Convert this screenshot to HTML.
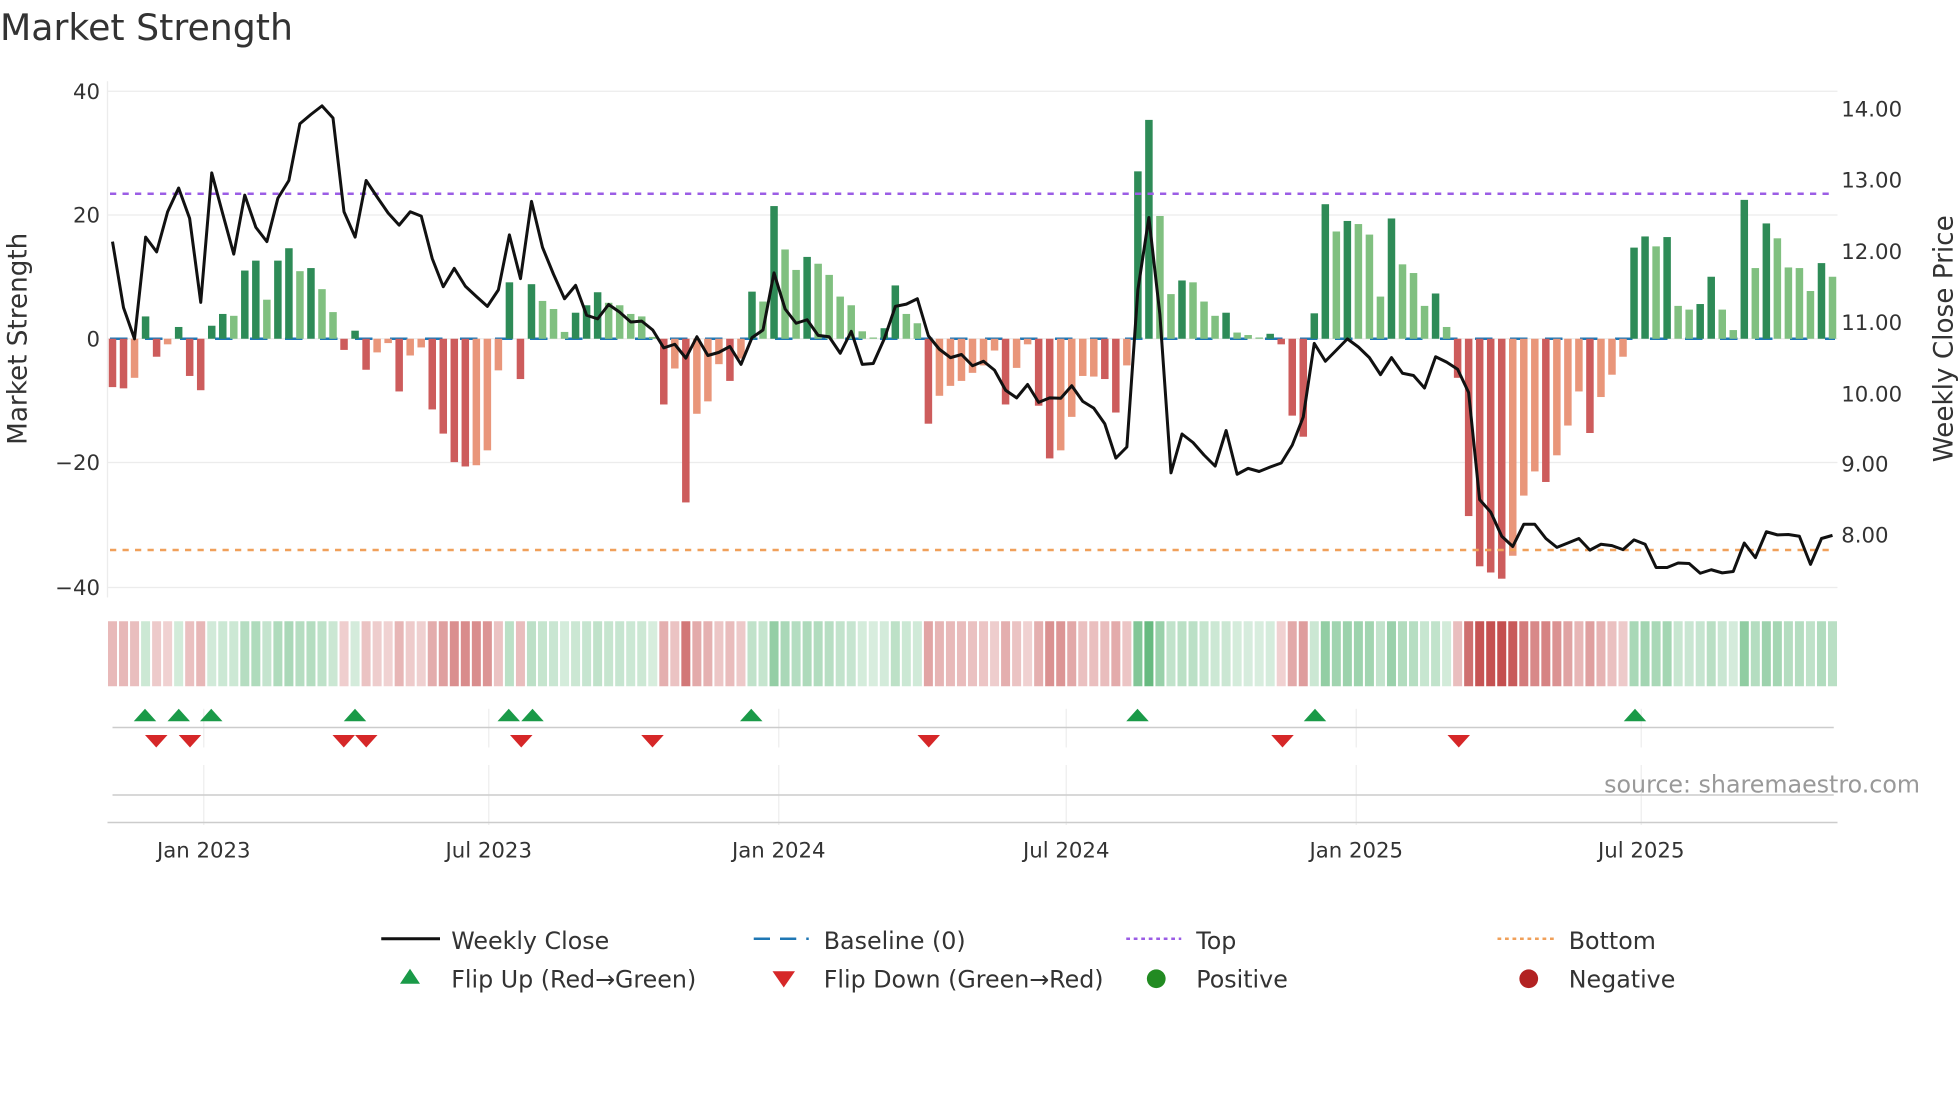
<!DOCTYPE html>
<html><head><meta charset="utf-8"><style>
html,body{margin:0;padding:0;background:#fff;width:1960px;height:1102px;overflow:hidden}
svg{display:block}
text{font-family:"DejaVu Sans","Liberation Sans",sans-serif;fill:#333}
</style></head><body>
<svg id="s" width="1960" height="1102" viewBox="0 0 1568 881.6" xmlns="http://www.w3.org/2000/svg">
<text x="0" y="32" font-size="29">Market Strength</text>
<g stroke="#ececec" stroke-width="1">
<line x1="86" y1="73" x2="1470" y2="73"/><line x1="86" y1="172" x2="1470" y2="172"/><line x1="86" y1="271" x2="1470" y2="271"/><line x1="86" y1="370" x2="1470" y2="370"/><line x1="86" y1="470" x2="1470" y2="470"/>
<line x1="86" y1="65" x2="86" y2="478"/>
</g>
<g font-size="17" text-anchor="end">
<text x="80" y="79">40</text><text x="80" y="178">20</text><text x="80" y="277">0</text><text x="80" y="376">−20</text><text x="80" y="476">−40</text>
</g>
<g font-size="17">
<text x="1473" y="93">14.00</text><text x="1473" y="150">13.00</text><text x="1473" y="207">12.00</text><text x="1473" y="264">11.00</text><text x="1473" y="321">10.00</text><text x="1473" y="377">9.00</text><text x="1473" y="434">8.00</text>
</g>
<text transform="translate(21,271) rotate(-90)" font-size="21" text-anchor="middle">Market Strength</text>
<text transform="translate(1562,271) rotate(-90)" font-size="21" text-anchor="middle">Weekly Close Price</text>
<g id="bars"></g>
<line x1="88" y1="155" x2="1468" y2="155" stroke="#9b5de5" stroke-width="2" stroke-dasharray="5 5"/>
<line x1="88" y1="440" x2="1468" y2="440" stroke="#f0a05a" stroke-width="2" stroke-dasharray="5 5"/>
<polyline id="price" fill="none" stroke="#111" stroke-width="2.4" stroke-linejoin="round"/>
<g id="heat"></g>
<g stroke="#eee" stroke-width="1">
<line x1="163" y1="567" x2="163" y2="598"/><line x1="391" y1="567" x2="391" y2="598"/><line x1="623" y1="567" x2="623" y2="598"/><line x1="853" y1="567" x2="853" y2="598"/><line x1="1085" y1="567" x2="1085" y2="598"/><line x1="1313" y1="567" x2="1313" y2="598"/>
<line x1="163" y1="612" x2="163" y2="660"/><line x1="391" y1="612" x2="391" y2="660"/><line x1="623" y1="612" x2="623" y2="660"/><line x1="853" y1="612" x2="853" y2="660"/><line x1="1085" y1="612" x2="1085" y2="660"/><line x1="1313" y1="612" x2="1313" y2="660"/>
</g>
<line x1="90" y1="582" x2="1467" y2="582" stroke="#ccc" stroke-width="1.2"/>
<line x1="90" y1="636" x2="1467" y2="636" stroke="#ccc" stroke-width="1.2"/>
<line x1="86" y1="658" x2="1470" y2="658" stroke="#ccc" stroke-width="1.2"/>
<g id="flips"></g>
<text x="1536" y="634" font-size="19" text-anchor="end" style="fill:#999">source: sharemaestro.com</text>
<g font-size="17" text-anchor="middle">
<text x="163" y="686">Jan 2023</text><text x="391" y="686">Jul 2023</text><text x="623" y="686">Jan 2024</text><text x="853" y="686">Jul 2024</text><text x="1085" y="686">Jan 2025</text><text x="1313" y="686">Jul 2025</text>
</g>
<g font-size="19">
<line x1="305" y1="751" x2="352" y2="751" stroke="#111" stroke-width="2.4"/>
<text x="361" y="759">Weekly Close</text>
<line x1="603" y1="751" x2="647" y2="751" stroke="#1f77b4" stroke-width="2" stroke-dasharray="13 8"/>
<text x="659" y="759">Baseline (0)</text>
<line x1="901" y1="751" x2="945" y2="751" stroke="#9b5de5" stroke-width="2" stroke-dasharray="3 3"/>
<text x="957" y="759">Top</text>
<line x1="1198" y1="751" x2="1243" y2="751" stroke="#f0a05a" stroke-width="2" stroke-dasharray="3 3"/>
<text x="1255" y="759">Bottom</text>
<polygon points="320,787 336,787 328,775" fill="#1a9a48"/>
<text x="361" y="790">Flip Up (Red→Green)</text>
<polygon points="618,777 636,777 627,790" fill="#d62728"/>
<text x="659" y="790">Flip Down (Green→Red)</text>
<circle cx="925" cy="783" r="7.5" fill="#228b22"/>
<text x="957" y="790">Positive</text>
<circle cx="1223" cy="783" r="7.5" fill="#b22222"/>
<text x="1255" y="790">Negative</text>
</g>
</svg>
<script>
var NS="http://www.w3.org/2000/svg";
function el(p,t,a){var e=document.createElementNS(NS,t);for(var k in a)e.setAttribute(k,a[k]);p.appendChild(e);return e;}
var B=[[-7.8,1],[-8,1],[-6.3,0],[3.6,1],[-2.9,1],[-0.9,0],[1.9,1],[-6,1],[-8.3,1],[2.1,1],[4,1],[3.7,0],[11,1],[12.6,1],[6.3,0],[12.6,1],[14.6,1],[10.9,0],[11.4,1],[8,0],[4.3,0],[-1.8,1],[1.3,1],[-5,1],[-2.2,0],[-0.7,0],[-8.5,1],[-2.7,0],[-1.4,0],[-11.4,1],[-15.3,1],[-19.9,1],[-20.6,1],[-20.4,0],[-18,0],[-5.1,0],[9.1,1],[-6.5,1],[8.8,1],[6.1,0],[4.8,0],
[1.1,0],[4.2,1],[5.4,1],[7.5,1],[5.8,0],[5.4,0],[4,0],[3.6,0],[0.3,0],[-10.6,1],[-4.8,0],[-26.4,1],[-12.1,0],[-10.1,0],[-4.1,0],[-6.8,1],[-3.2,0],[7.6,1],[6,0],[21.4,1],[14.4,0],[11.1,0],[13.2,1],[12.1,0],[10.3,0],[6.8,0],[5.4,0],[1.2,0],[0.2,0],[1.7,1],[8.6,1],[4,0],[2.5,0],[-13.7,1],[-9.2,0],[-7.6,0],[-6.8,0],[-5.5,0],[-4.3,0],[-1.9,0],
[-10.6,1],[-4.7,0],[-0.9,0],[-10.8,1],[-19.3,1],[-18,0],[-12.6,0],[-6,0],[-6.1,0],[-6.5,1],[-11.9,1],[-4.3,0],[27,1],[35.3,1],[19.8,0],[7.2,0],[9.4,1],[9.1,0],[6,0],[3.7,0],[4.2,1],[1,0],[0.6,0],[0.2,0],[0.8,1],[-0.9,1],[-12.4,1],[-15.8,1],[4.1,1],[21.7,1],[17.3,0],[19,1],[18.5,0],[16.8,0],[6.8,0],[19.4,1],[12,0],[10.6,0],[5.3,0],[7.3,1],
[1.9,0],[-6.3,1],[-28.6,1],[-36.7,1],[-37.7,1],[-38.7,1],[-35,0],[-25.3,0],[-21.4,0],[-23.1,1],[-18.8,0],[-14,0],[-8.5,0],[-15.2,1],[-9.4,0],[-5.8,0],[-2.9,0],[14.7,1],[16.5,1],[14.9,0],[16.4,1],[5.3,0],[4.7,0],[5.6,1],[10,1],[4.7,0],[1.4,0],[22.4,1],[11.4,0],[18.6,1],[16.2,0],[11.5,0],[11.4,0],[7.7,0],[12.2,1],[10]];
var P=[362,510,580,352,385,295,242,310,498,208,300,390,258,330,362,265,225,98,77,58,85,295,352,225,262,298,325,295,305,400,463,422,462,485,507,470,347,445,272,375,435,
490,460,527,535,503,520,542,540,560,600,592,623,575,617,610,597,637,577,560,432,513,545,537,572,575,612,563,637,635,580,507,502,490,573,603,622,615,640,630,650,
695,712,682,722,712,713,685,720,735,770,847,822,470,308,525,880,793,812,840,865,785,883,870,877,867,858,818,755,590,630,605,580,598,622,660,622,657,662,690,620,
632,648,700,940,968,1022,1045,995,995,1027,1047,1037,1027,1053,1040,1043,1052,1030,1040,1092,1092,1082,1083,1105,1097,1104,1101,1037,1070,1012,1019,1018,1022,1085,1027,1020];
var bars=document.getElementById('bars'),heat=document.getElementById('heat');
var step=(1466-90)/(B.length-1);
el(bars,'line',{x1:88,y1:271,x2:1468,y2:271,stroke:'#1f77b4','stroke-width':2,'stroke-dasharray':'14 14'});
var pts=[];
for(var i=0;i<B.length;i++){
  var x=90+i*step,v=B[i][0],d=B[i][1];
  var h=Math.abs(v)*4.96,y=v>=0?271-h:271;
  var c=v>=0?(d?'#2e8b57':'#80c080'):(d?'#cd5c5c':'#e9967a');
  el(bars,'rect',{x:x-3,y:y,width:6,height:Math.max(h,0.5),fill:c});
  var a=0.22+Math.min(Math.abs(v)/38,1)*0.68;
  var hc=v>=0?'rgba(46,160,80,'+(a*0.85)+')':'rgba(190,60,60,'+a+')';
  el(heat,'rect',{x:x-3.6,y:497,width:7.2,height:52,fill:hc});
  if(i<P.length)pts.push(x.toFixed(1)+','+(P[i]/2.8+64).toFixed(1));
}
document.getElementById('price').setAttribute('points',pts.join(' '));
var f=document.getElementById('flips');
[116,143,169,284,407,426,601,910,1052,1308].forEach(function(x){el(f,'polygon',{points:(x-9)+',577 '+(x+9)+',577 '+x+',567',fill:'#1a9a48'});});
[125,152,275,293,417,522,743,1026,1167].forEach(function(x){el(f,'polygon',{points:(x-9)+',588 '+(x+9)+',588 '+x+',598',fill:'#d62728'});});
</script>
</body></html>
